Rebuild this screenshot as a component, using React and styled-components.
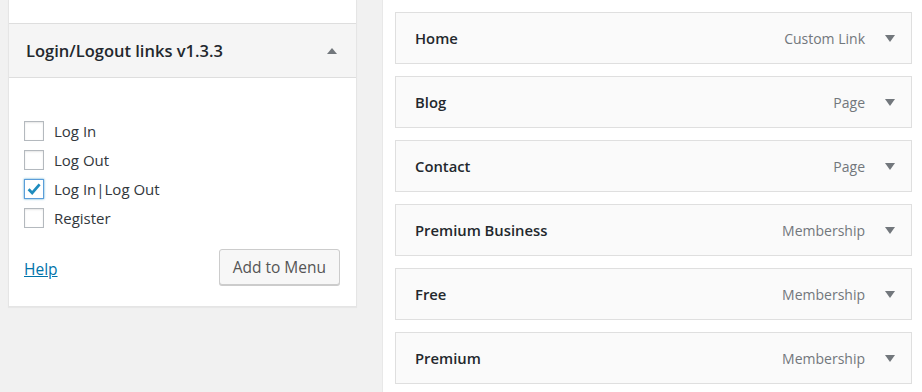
import styled, { createGlobalStyle } from "styled-components";

const GlobalStyle = createGlobalStyle`
  html, body {
    margin: 0;
    padding: 0;
    background: #f1f1f1;
  }
  body {
    font-family: "Open Sans", "Noto Sans", sans-serif;
    color: #23282d;
  }
`;

const Page = styled.div`
  display: flex;
  height: 392px;
  overflow: hidden;
`;

const Sidebar = styled.div`
  width: 349px;
  padding: 0 25px 0 8px;
  flex-shrink: 0;
`;

const Panel = styled.div`
  background: #fff;
  border: 1px solid #e5e5e5;
  border-top: none;
  box-shadow: 0 1px 1px rgba(0, 0, 0, 0.04);
`;

const PrevSection = styled.div`
  height: 23px;
  border-bottom: 1px solid #dedede;
`;

const SectionTitle = styled.div`
  height: 53px;
  background: #f5f5f5;
  border-bottom: 1px solid #dedede;
  display: flex;
  align-items: center;
  justify-content: space-between;
  padding: 0 19px 0 17px;
  font-size: 16.5px;
  font-weight: 600;
  color: #23282d;
`;

const Arrow = styled.span`
  width: 0;
  height: 0;
  border-left: 5px solid transparent;
  border-right: 5px solid transparent;
  ${(p) =>
    p.$up
      ? "border-bottom: 6px solid #72777c;"
      : "border-top: 7px solid #72777c;"}
`;

const SectionBody = styled.div`
  padding: 43px 16px 21px 15px;
`;

const CheckList = styled.ul`
  list-style: none;
  margin: 0;
  padding: 0;
  display: flex;
  flex-direction: column;
  gap: 9px;
`;

const CheckRow = styled.li`
  display: flex;
  align-items: center;
  gap: 10px;
  height: 20px;
  font-size: 15px;
  color: #32373c;
`;

const Box = styled.span`
  position: relative;
  box-sizing: border-box;
  width: 20px;
  height: 20px;
  flex-shrink: 0;
  border: 1px solid ${(p) => (p.$checked ? "#5b9dd9" : "#b4b9be")};
  background: #fff;
  box-shadow: ${(p) =>
    p.$checked
      ? "0 0 2px rgba(30, 140, 190, 0.8)"
      : "inset 0 1px 2px rgba(0, 0, 0, 0.1)"};

  svg {
    position: absolute;
    left: -1px;
    top: -1px;
  }
`;

const Actions = styled.div`
  margin-top: 21px;
  display: flex;
  justify-content: space-between;
  align-items: center;
`;

const HelpLink = styled.a`
  color: #0073aa;
  text-decoration: underline;
  font-size: 15.5px;
  margin-top: 3px;
`;

const Button = styled.button`
  height: 36px;
  padding: 0 13px;
  font-family: inherit;
  font-size: 15.5px;
  color: #555;
  background: #f7f7f7;
  border: 1px solid #ccc;
  border-radius: 3px;
  box-shadow: 0 1px 0 #ccc;
  cursor: pointer;
`;

const Main = styled.div`
  flex: 1;
  background: #fff;
  border-left: 1px solid #e8e8e8;
  padding: 12px 10px 0 12px;
  display: flex;
  flex-direction: column;
  gap: 12px;
`;

const MenuItem = styled.div`
  height: 50px;
  background: #fafafa;
  border: 1px solid #dfdfdf;
  display: flex;
  align-items: center;
  padding: 0 16px 0 19px;
`;

const ItemTitle = styled.span`
  flex: 1;
  font-size: 14.8px;
  font-weight: 600;
  color: #23282d;
`;

const ItemType = styled.span`
  font-size: 14px;
  color: #72777c;
  margin-right: 20px;
`;

const Check = () => (
  <svg width="20" height="20" viewBox="0 0 20 20">
    <path
      d="M4.6 10.2l3.6 3.8 7.4-8.6"
      fill="none"
      stroke="#1e8cbe"
      strokeWidth="2.7"
    />
  </svg>
);

const options = [
  { label: "Log In", checked: false },
  { label: "Log Out", checked: false },
  { label: "Log In|Log Out", checked: true },
  { label: "Register", checked: false },
];

const items = [
  { title: "Home", type: "Custom Link" },
  { title: "Blog", type: "Page" },
  { title: "Contact", type: "Page" },
  { title: "Premium Business", type: "Membership" },
  { title: "Free", type: "Membership" },
  { title: "Premium", type: "Membership" },
];

export default function App() {
  return (
    <>
      <GlobalStyle />
      <Page>
        <Sidebar>
          <Panel>
            <PrevSection />
            <SectionTitle>
              Login/Logout links v1.3.3
              <Arrow $up />
            </SectionTitle>
            <SectionBody>
              <CheckList>
                {options.map((o) => (
                  <CheckRow key={o.label}>
                    <Box $checked={o.checked}>{o.checked && <Check />}</Box>
                    {o.label}
                  </CheckRow>
                ))}
              </CheckList>
              <Actions>
                <HelpLink href="#">Help</HelpLink>
                <Button>Add to Menu</Button>
              </Actions>
            </SectionBody>
          </Panel>
        </Sidebar>
        <Main>
          {items.map((it) => (
            <MenuItem key={it.title}>
              <ItemTitle>{it.title}</ItemTitle>
              <ItemType>{it.type}</ItemType>
              <Arrow />
            </MenuItem>
          ))}
        </Main>
      </Page>
    </>
  );
}
